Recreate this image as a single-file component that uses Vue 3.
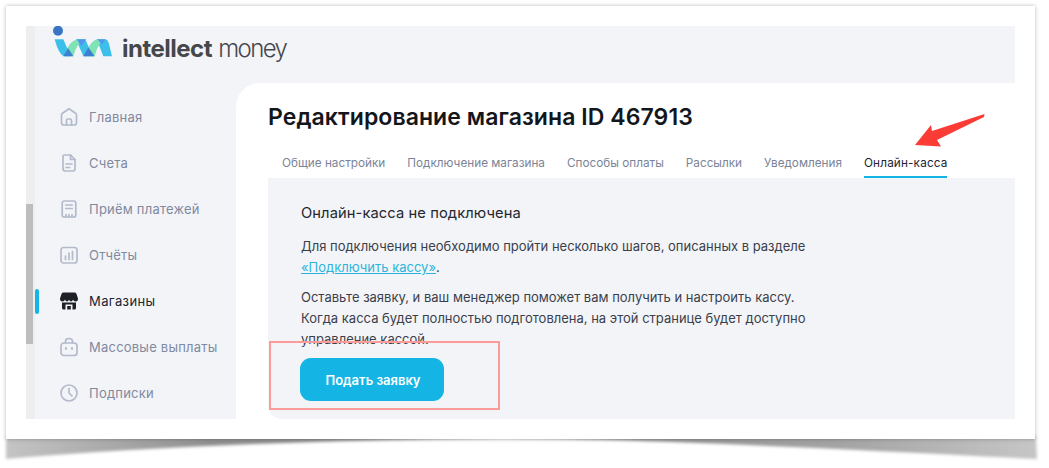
<script setup>
const navItems = [
  { label: "Главная", icon: "home" },
  { label: "Счета", icon: "doc" },
  { label: "Приём платежей", icon: "receipt" },
  { label: "Отчёты", icon: "chart" },
  { label: "Магазины", icon: "shop", active: true },
  { label: "Массовые выплаты", icon: "bag" },
  { label: "Подписки", icon: "clock" },
];

const tabs = [
  { label: "Общие настройки" },
  { label: "Подключение магазина" },
  { label: "Способы оплаты" },
  { label: "Рассылки" },
  { label: "Уведомления" },
  { label: "Онлайн-касса", active: true },
];
</script>

<template>
  <div class="page">
    <!-- curled paper shadow under the card -->
    <svg class="curl" viewBox="0 0 1049 468" width="1049" height="468">
      <defs>
        <linearGradient id="curlFill" x1="0" x2="1" y1="0" y2="0">
          <stop offset="0" stop-color="#c4c4c4" />
          <stop offset="0.2" stop-color="#8f8f8f" />
          <stop offset="0.5" stop-color="#8a8a8a" />
          <stop offset="0.8" stop-color="#a2a2a2" />
          <stop offset="1" stop-color="#c6c6c6" />
        </linearGradient>
        <filter id="curlBlur" x="-2%" y="-30%" width="104%" height="160%">
          <feGaussianBlur stdDeviation="1.4" />
        </filter>
      </defs>
      <path d="M6 436 L1036 436 L1037 459 Q 640 438 500 438 Q 200 442 6 459 Z" fill="url(#curlFill)" filter="url(#curlBlur)" />
    </svg>

    <div class="card">
      <div class="shot">
        <div class="scrollbar"><div class="thumb"></div></div>
        <div class="app">
          <header class="topbar">
            <svg class="logo-mark" width="70" height="36" viewBox="0 12 210 108">
              <circle cx="30" cy="26" r="15" fill="#3a75c4" />
              <path d="M20 52H46L68 103H48Q32 98 20 52Z" fill="#3cc0ea" />
              <path d="M84 52H112L134 103H106Z" fill="#3cc0ea" />
              <path d="M146 52H172Q180 52 184 70L192 103H166Z" fill="#3cc0ea" />
              <path d="M50 103Q62 54 92 52H112Q86 62 76 103Z" fill="#7fe3b5" />
              <path d="M112 103Q126 54 150 52H172Q150 62 140 103Z" fill="#7fe3b5" />
              <path d="M86 52H114L100 72Z" fill="#4f96ef" />
              <path d="M148 52H172L162 68Z" fill="#4f96ef" />
              <path d="M46 103L60 78L76 103Z" fill="#3f7fd0" />
              <path d="M106 103L121 76L140 103Z" fill="#3f7fd0" />
            </svg>
            <div class="logo-text"><b>intellect</b> <span>money</span></div>
          </header>

          <div class="body">
            <nav class="sidebar">
              <div v-for="item in navItems" :key="item.label" class="nav-item" :class="{ active: item.active }">
                <svg class="nav-icon" width="20" height="20" viewBox="0 0 20 20" fill="none" stroke="currentColor" stroke-width="1.7" stroke-linecap="round" stroke-linejoin="round">
                  <template v-if="item.icon === 'home'">
                    <path d="M2.5 8 Q2.500 7 3.500 6.200 L10 1.800 L16.500 6.200 Q17.500 7 17.500 8 V15.500 Q17.500 18 15 18 H5 Q2.500 18 2.500 15.500 Z" />
                    <path d="M7.500 18 V13.500 Q7.500 12 9 12 H11 Q12.500 12 12.500 13.500 V18" />
                  </template>
                  <template v-else-if="item.icon === 'doc'">
                    <path d="M5.500 2 H11.500 L16 6.500 V15.500 Q16 18 13.500 18 H6.500 Q4 18 4 15.500 V3.500 Q4 2 5.500 2 Z" />
                    <path d="M11.500 2 V6.500 H16 M7 11 H13 M7 14.500 H10.500" />
                  </template>
                  <template v-else-if="item.icon === 'receipt'">
                    <path d="M5.500 2 H14.500 Q16.800 2 16.800 4.300 V16 Q16.800 18 15 18 H5 Q3.200 18 3.200 16 V4.300 Q3.200 2 5.500 2 Z" />
                    <path d="M6.800 6 H13.200 M6.800 9.500 H13.200 M7 15.500 V18 M10 15.500 V18 M13 15.500 V18" />
                  </template>
                  <template v-else-if="item.icon === 'chart'">
                    <rect x="2" y="2.500" width="16" height="15.500" rx="2.500" />
                    <path d="M6.500 14.500 V11 M10 14.500 V8 M13.500 14.500 V6.500" />
                  </template>
                  <template v-else-if="item.icon === 'shop'">
                    <path d="M4 1.500 H16 Q17 1.500 17.500 3 L19 7.500 Q19 10.500 16.800 10.500 Q14.800 10.500 14 8.800 Q13.300 10.500 12 10.500 Q10.700 10.500 10 8.800 Q9.300 10.500 8 10.500 Q6.700 10.500 6 8.800 Q5.200 10.500 3.200 10.500 Q1 10.500 1 7.500 L2.500 3 Q3 1.500 4 1.500 Z" fill="currentColor" stroke="none" />
                    <path d="M3 11.500 H17 V17 Q17 18.500 15.500 18.500 H13.500 V13.500 H6.500 V18.500 H4.500 Q3 18.500 3 17 Z M8.200 15 H11.800 V18.500 H8.200 Z" fill="currentColor" stroke="none" />
                  </template>
                  <template v-else-if="item.icon === 'bag'">
                    <rect x="2" y="6" width="16" height="12.500" rx="3" />
                    <path d="M6.500 6 V4.500 Q6.500 1.500 10 1.500 Q13.500 1.500 13.500 4.500 V6" />
                    <path d="M7 11 V12 M13 11 V12" stroke-width="2" />
                  </template>
                  <template v-else>
                    <circle cx="10" cy="10" r="8" />
                    <path d="M10 5.500 V10 L13 13" />
                  </template>
                </svg>
                <span>{{ item.label }}</span>
              </div>
            </nav>

            <main class="main">
              <h1 class="title">Редактирование магазина ID 467913</h1>
              <div class="tabs">
                <div v-for="tab in tabs" :key="tab.label" class="tab" :class="{ active: tab.active }">{{ tab.label }}</div>
              </div>
              <section class="panel">
                <h2 class="panel-title">Онлайн-касса не подключена</h2>
                <p class="text">
                  Для подключения необходимо пройти несколько шагов, описанных в разделе<br />
                  <a class="link">«Подключить кассу»</a>.
                </p>
                <p class="text">
                  Оставьте заявку, и ваш менеджер поможет вам получить и настроить кассу.<br />
                  Когда касса будет полностью подготовлена, на этой странице будет доступно<br />
                  управление кассой.
                </p>
                <button class="submit">Подать заявку</button>
              </section>
            </main>
          </div>
        </div>
      </div>
    </div>

    <!-- annotations drawn over the screenshot -->
    <div class="mark-box"></div>
    <svg class="mark-arrow" width="72" height="38" viewBox="0 0 72 38">
      <path d="M69.500 2 L17 19 L16 13 L0 33 L26 34.500 L22 28 L69 5 Z" fill="#fb3c36" />
    </svg>
  </div>
</template>

<style scoped>
.page {
  position: relative;
  width: 1049px;
  height: 468px;
  overflow: hidden;
  background: #fff;
  font-family: Inter, "Noto Sans", sans-serif;
  padding: 6px 14px 29px 6px;
  box-sizing: border-box;
}

.curl {
  position: absolute;
  left: 0;
  top: 0;
}

.card {
  position: relative;
  height: 100%;
  padding: 20px;
  box-sizing: border-box;
  background: #fff;
  box-shadow: 0 0 4px rgba(0, 0, 0, 0.28);
}

.shot {
  display: flex;
  height: 100%;
  overflow: hidden;
}

.scrollbar {
  width: 9px;
  flex: none;
  background: #eeeeee;
  padding-top: 178px;
  box-sizing: border-box;
}

.thumb {
  width: 7px;
  height: 140px;
  background: #bdbdbd;
}

.app {
  flex: 1;
  min-width: 0;
  display: flex;
  flex-direction: column;
  background: #f3f4f8;
}

.topbar {
  position: relative;
  height: 57px;
  flex: none;
}

.logo-mark {
  position: absolute;
  left: 13px;
  top: 0;
}

.logo-text {
  position: absolute;
  left: 87px;
  top: 7px;
  font-size: 24px;
  line-height: 32px;
  color: #45474b;
  letter-spacing: -0.5px;
  white-space: nowrap;
}

.logo-text b {
  font-weight: 700;
}

.logo-text span {
  font-weight: 300;
  letter-spacing: -1.6px;
}

.body {
  flex: 1;
  display: flex;
  min-height: 0;
}

.sidebar {
  width: 201px;
  flex: none;
  padding-top: 11px;
  box-sizing: border-box;
}

.nav-item {
  position: relative;
  height: 46px;
  display: flex;
  align-items: center;
  gap: 10px;
  padding-left: 24px;
  font-size: 13px;
  letter-spacing: 0.22px;
  color: #8089a0;
}

.nav-icon {
  flex: none;
  color: #b3bacb;
}

.nav-item.active {
  color: #1d2433;
  letter-spacing: 0.4px;
}

.nav-item.active .nav-icon {
  color: #1d2026;
}

.nav-item.active::before {
  content: "";
  position: absolute;
  left: 0;
  top: 11px;
  width: 4px;
  height: 25px;
  border-radius: 2px;
  background: #14b5e4;
}

.main {
  flex: 1;
  min-width: 0;
  background: #fff;
  border-top-left-radius: 24px;
  padding: 20px 0 0 32px;
  display: flex;
  flex-direction: column;
}

.title {
  margin: 0;
  font-size: 23px;
  line-height: 29px;
  font-weight: 600;
  color: #14161b;
  letter-spacing: 0.08px;
  white-space: nowrap;
}

.tabs {
  display: flex;
  gap: 22px;
  padding-left: 14px;
  margin-top: 16px;
  height: 30px;
  flex: none;
}

.tab {
  font-size: 11.75px;
  line-height: 20px;
  color: #7b8497;
  white-space: nowrap;
  height: 30px;
  padding-top: 5px;
  box-sizing: border-box;
}

.tab.active {
  color: #1d2433;
  letter-spacing: 0.15px;
  border-bottom: 2px solid #14b5e4;
}

.panel {
  flex: 1;
  background: #f3f4f8;
  border-bottom-left-radius: 14px;
  padding: 25px 33px 0;
  color: #3a3f4b;
}

.panel-title {
  margin: 0 0 13px;
  font-size: 14.7px;
  line-height: 20px;
  font-weight: 400;
  color: #23272f;
  letter-spacing: 0.1px;
}

.text {
  margin: 0 0 9px;
  font-size: 13px;
  line-height: 21px;
  white-space: nowrap;
}

.link {
  color: #2cb4dc;
  text-decoration: underline;
}

.submit {
  display: block;
  width: 144px;
  height: 43px;
  margin-top: -1px;
  margin-left: -1px;
  padding-left: 8px;
  border: 0;
  border-radius: 11px;
  background: #14b5e4;
  color: #fff;
  font-family: inherit;
  font-size: 13px;
  font-weight: 600;
}

.mark-box {
  position: absolute;
  left: 269px;
  top: 341px;
  width: 231px;
  height: 69px;
  box-sizing: border-box;
  border: 2px solid #fd9a9a;
}

.mark-arrow {
  position: absolute;
  left: 915px;
  top: 112px;
}
</style>

<style>
html,
body {
  margin: 0;
  background: #fff;
}
</style>
